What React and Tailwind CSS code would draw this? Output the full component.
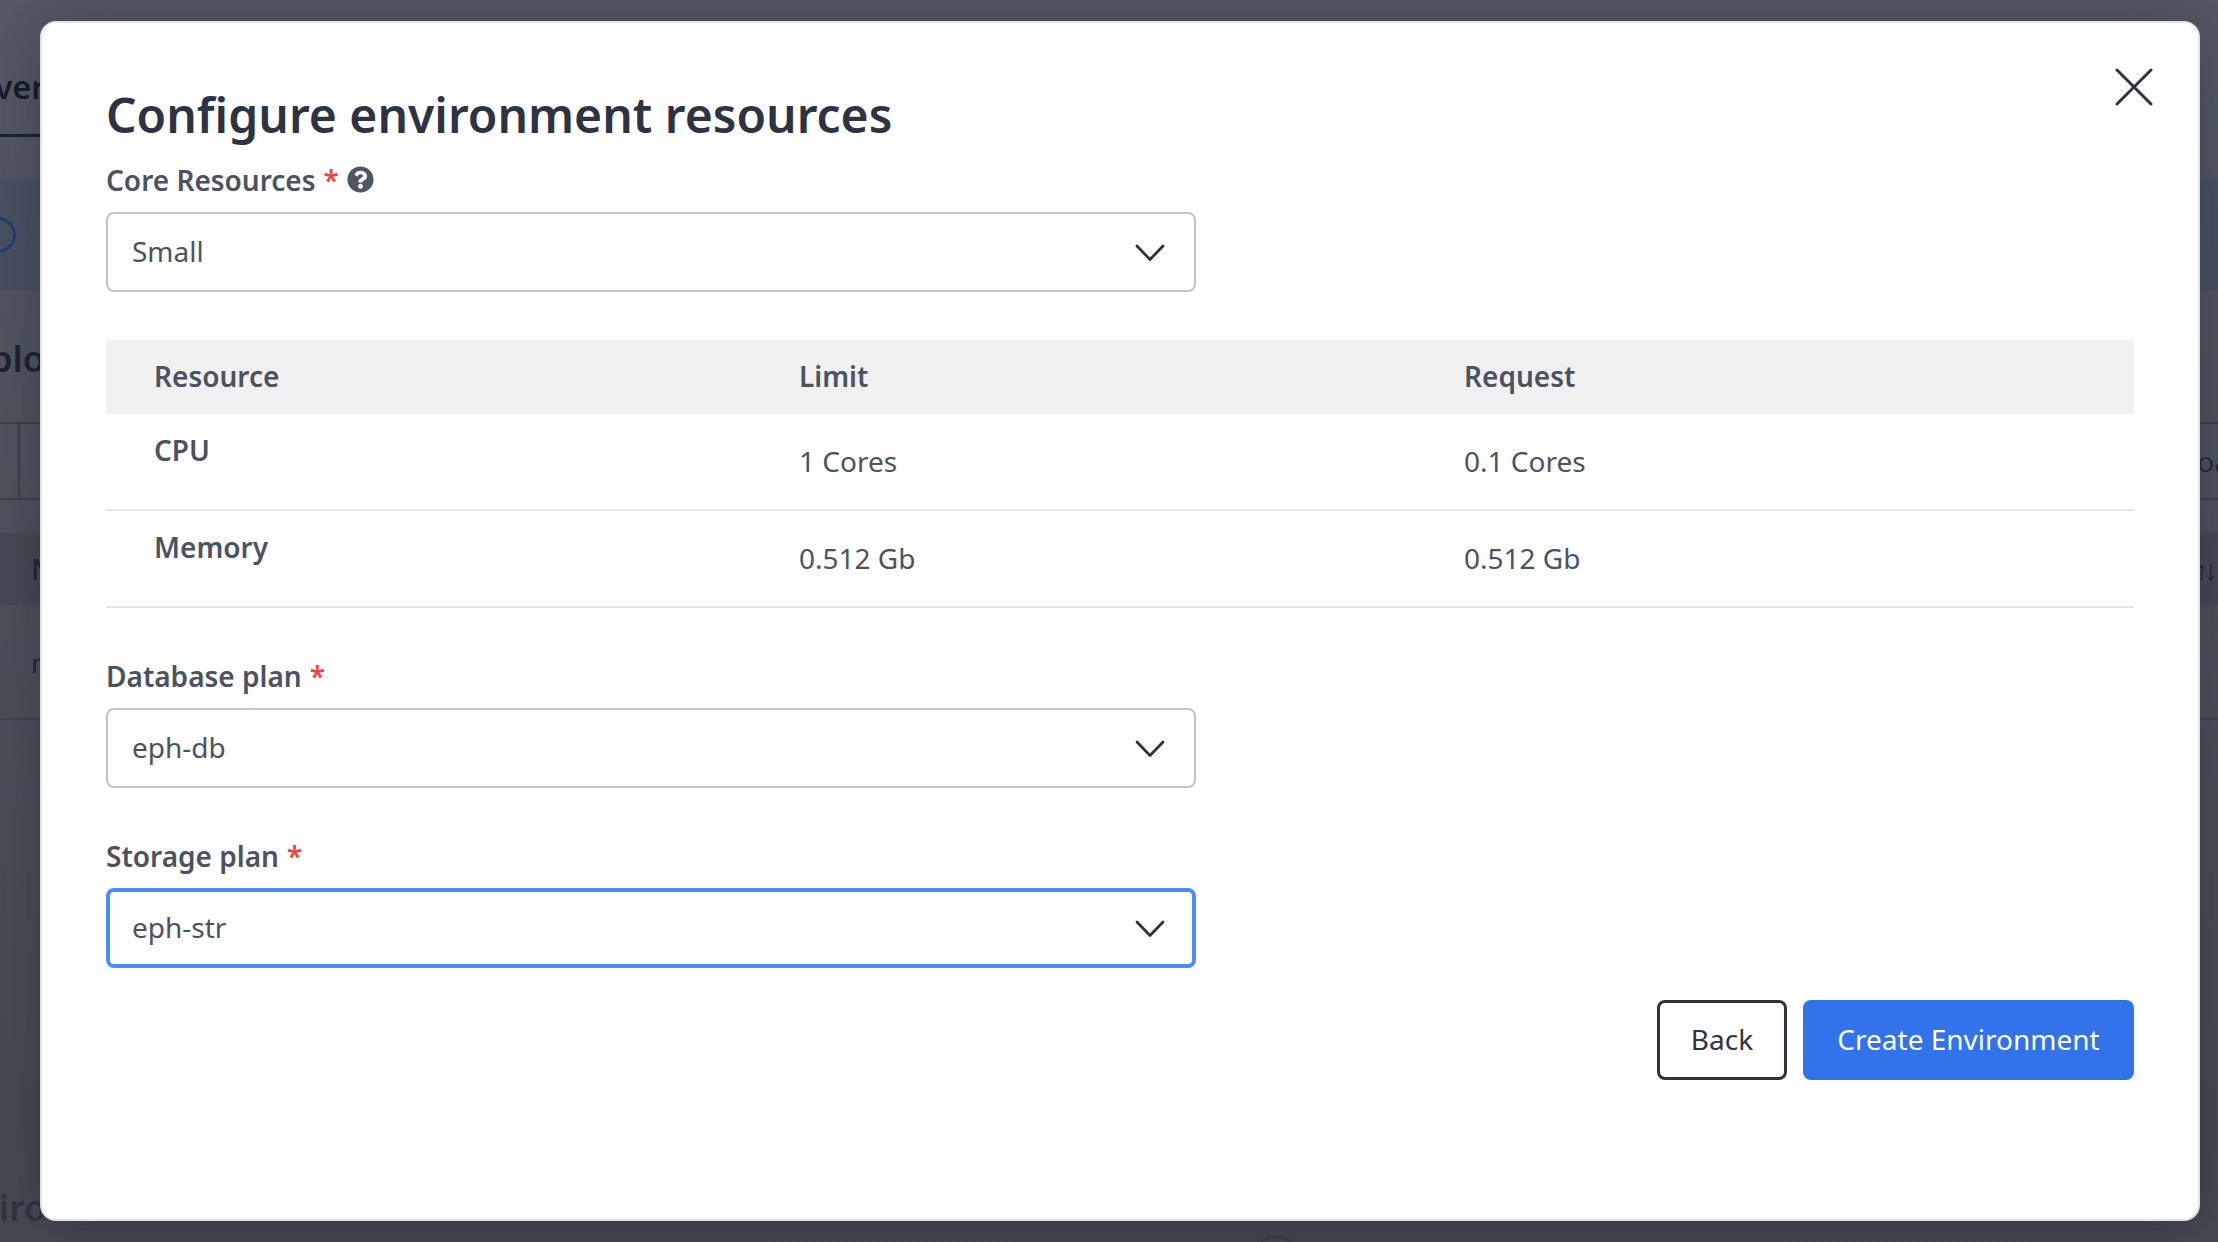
import { FaQuestionCircle } from 'react-icons/fa';

const rows = [
  { name: 'CPU', limit: '1 Cores', request: '0.1 Cores', height: 'h-[96px]' },
  { name: 'Memory', limit: '0.512 Gb', request: '0.512 Gb', height: 'h-[97px]' },
];

function Chevron() {
  return (
    <svg width="32" height="20" viewBox="0 0 32 20" fill="none" className="text-[#2d3343] mt-[2px]">
      <path d="M3 3 L16 16.5 L29 3" stroke="currentColor" strokeWidth="2.8" strokeLinecap="round" strokeLinejoin="round" />
    </svg>
  );
}

function Label({ text, help }) {
  return (
    <div className="flex items-center h-[34px] text-[28px] font-semibold text-[#4b5361] leading-none">
      <span>{text}</span>
      <span className="ml-[8px] text-[#ef4444]">*</span>
      {help && <FaQuestionCircle className="ml-[8px] text-[#4f5663] -mt-[2px]" size={27} />}
    </div>
  );
}

function Select({ value, focused }) {
  return (
    <div
      className={`flex items-center justify-between w-[1090px] h-[80px] bg-white rounded-[8px] text-[28px] text-[#4b5361] ${
        focused ? 'pl-[22px] pr-[26px] border-[4px] border-[#4a8ff5]' : 'pl-[24px] pr-[28px] border-[2px] border-[#c3c3cb]'
      }`}
    >
      <span className="-mt-[2px]">{value}</span>
      <Chevron />
    </div>
  );
}

function Backdrop() {
  return (
    <div className="h-[1242px] overflow-hidden bg-[#555a66] text-[#141a2a] font-semibold flex flex-col">
      <div className="h-[137px] shrink-0 flex flex-col justify-end">
        <div className="text-[32px] leading-none -ml-[5px] pb-[31px]">verv</div>
        <div className="h-[3px] w-[60px] bg-[#1a2033]" />
      </div>
      <div className="h-[43px] shrink-0" />
      <div className="h-[110px] shrink-0 bg-[#4a5566] flex items-center">
        <div className="w-[36px] h-[36px] rounded-full border-[3px] border-[#1f3f7f] -ml-[20px]" />
      </div>
      <div className="h-[132px] shrink-0 flex items-center justify-between pt-[5px]">
        <span className="text-[36px] leading-none -ml-[10px]">plo</span>
      </div>
      <div className="h-[78px] shrink-0 border-y-2 border-[#3c404b] flex justify-between items-center">
        <div className="h-full w-[20px] border-r-2 border-[#3c404b]" />
        <span className="text-[28px] font-normal text-[#1c2232] -mr-[12px]">oa</span>
      </div>
      <div className="h-[33px] shrink-0" />
      <div className="h-[72px] shrink-0 bg-[#4a4e5a] flex items-center justify-between pl-[31px]">
        <span className="text-[28px]">N</span>
        <span className="text-[28px] font-normal tracking-[-5px] mr-[5px]">↑↓</span>
      </div>
      <div className="h-[115px] shrink-0 border-b-2 border-[#454955] flex items-center pl-[31px]">
        <span className="text-[28px] font-normal">r</span>
      </div>
      <div className="flex-1 flex items-end pb-[16px]">
        <span className="text-[36px] leading-none -ml-[1px]">iro</span>
        <div className="shrink-0 w-[60px] h-[60px] rounded-full border-[4px] border-[#3a3d47] ml-[1200px] -mb-[69px]" />
      </div>
    </div>
  );
}

export default function App() {
  return (
    <div className="relative w-[2218px] h-[1242px] overflow-hidden font-['Noto_Sans',sans-serif]">
      <Backdrop />
      <div className="absolute inset-0 bg-gradient-to-b from-transparent to-[#3e414b]/70" />

      <div className="absolute left-[40px] top-[21px] w-[2160px] h-[1200px] bg-white rounded-[16px] border-[2px] border-[#e2e2e2] shadow-[0_0_60px_rgba(20,24,36,0.35)] px-[64px]">
        <button className="absolute right-[45px] top-[45px] text-[#2d3343]">
          <svg width="38" height="38" viewBox="0 0 38 38" fill="none">
            <path d="M2 2 L36 36 M36 2 L2 36" stroke="currentColor" strokeWidth="3" strokeLinecap="round" />
          </svg>
        </button>

        <h1 className="pt-[62px] h-[127px] text-[48px] leading-[60px] font-semibold text-[#2d3343]">
          Configure environment resources
        </h1>

        <div className="mt-[13px]">
          <Label text="Core Resources" help />
        </div>
        <div className="mt-[15px]">
          <Select value="Small" />
        </div>

        <table className="mt-[48px] w-full table-fixed text-[28px] text-[#4b5361]">
          <thead>
            <tr className="h-[74px] bg-[#f1f1f1] text-left font-semibold">
              <th className="w-[693px] pl-[48px] pb-[2px] font-semibold">Resource</th>
              <th className="w-[665px] pb-[2px] font-semibold">Limit</th>
              <th className="pb-[2px] font-semibold">Request</th>
            </tr>
          </thead>
          <tbody>
            {rows.map((row) => (
              <tr key={row.name} className={`${row.height} border-b-[2px] border-[#e5e5e5]`}>
                <td className="pl-[48px] pb-[24px] font-semibold">{row.name}</td>
                <td className="pb-[2px]">{row.limit}</td>
                <td className="pb-[2px]">{row.request}</td>
              </tr>
            ))}
          </tbody>
        </table>

        <div className="mt-[51px]">
          <Label text="Database plan" />
        </div>
        <div className="mt-[15px]">
          <Select value="eph-db" />
        </div>

        <div className="mt-[51px]">
          <Label text="Storage plan" />
        </div>
        <div className="mt-[15px]">
          <Select value="eph-str" focused />
        </div>

        <div className="mt-[32px] flex justify-end gap-[16px] text-[28px]">
          <button className="w-[130px] h-[80px] pb-[2px] rounded-[8px] border-[3px] border-[#2d3343] text-[#2d3343] bg-white">
            Back
          </button>
          <button className="w-[331px] h-[80px] pb-[2px] rounded-[8px] bg-[#3272ea] text-white">
            Create Environment
          </button>
        </div>
      </div>
    </div>
  );
}
